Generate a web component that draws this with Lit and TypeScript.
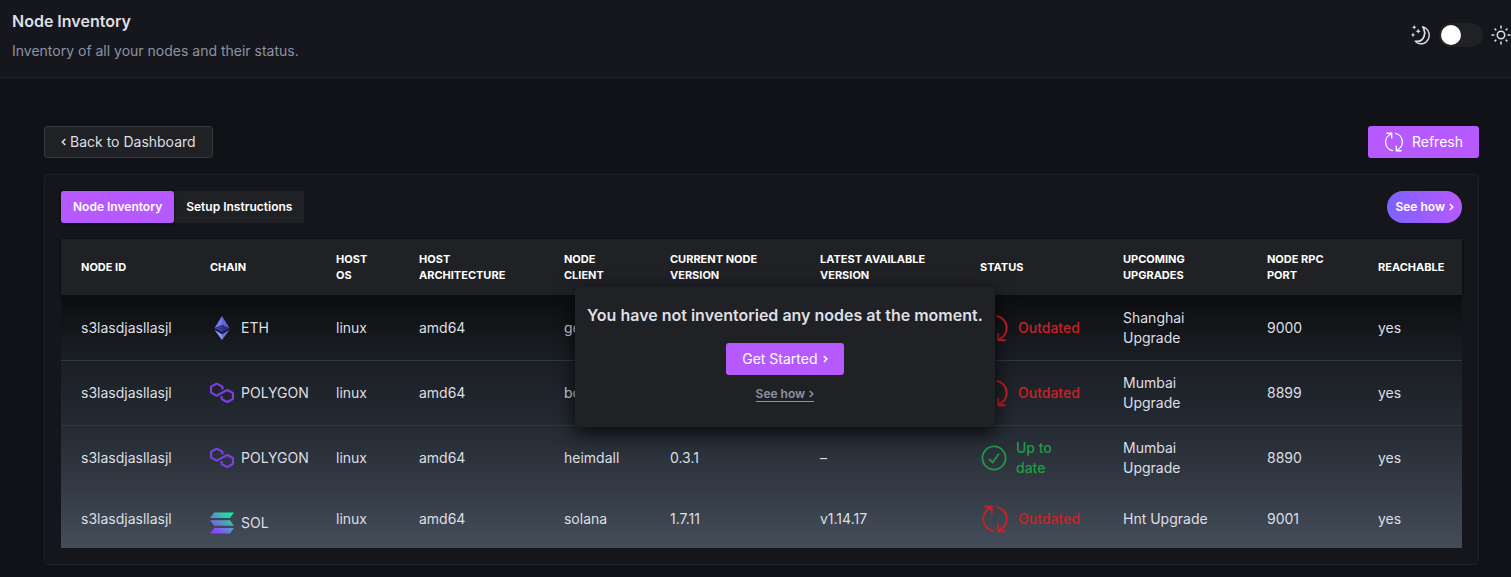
import { LitElement, html, css, svg } from "lit";
import { customElement, state } from "lit/decorators.js";

type Chain = "ETH" | "POLYGON" | "SOL";

interface NodeRow {
  id: string;
  chain: Chain;
  os: string;
  arch: string;
  client: string;
  current: string;
  latest: string;
  outdated: boolean;
  upgrade: string;
  port: string;
  reachable: string;
}

const COLUMNS = [
  { label: "Node ID", width: 129 },
  { label: "Chain", width: 126 },
  { label: "Host OS", width: 83 },
  { label: "Host Architecture", width: 145 },
  { label: "Node Client", width: 106 },
  { label: "Current Node Version", width: 150 },
  { label: "Latest Available Version", width: 160 },
  { label: "Status", width: 143 },
  { label: "Upcoming Upgrades", width: 144 },
  { label: "Node RPC Port", width: 111 },
  { label: "Reachable", width: 104 },
];
const TOTAL = COLUMNS.reduce((sum, c) => sum + c.width, 0);

const ROWS: NodeRow[] = [
  { id: "s3lasdjasllasjl", chain: "ETH", os: "linux", arch: "amd64", client: "geth", current: "", latest: "", outdated: true, upgrade: "Shanghai Upgrade", port: "9000", reachable: "yes" },
  { id: "s3lasdjasllasjl", chain: "POLYGON", os: "linux", arch: "amd64", client: "bor", current: "", latest: "", outdated: true, upgrade: "Mumbai Upgrade", port: "8899", reachable: "yes" },
  { id: "s3lasdjasllasjl", chain: "POLYGON", os: "linux", arch: "amd64", client: "heimdall", current: "0.3.1", latest: "–", outdated: false, upgrade: "Mumbai Upgrade", port: "8890", reachable: "yes" },
  { id: "s3lasdjasllasjl", chain: "SOL", os: "linux", arch: "amd64", client: "solana", current: "1.7.11", latest: "v1.14.17", outdated: true, upgrade: "Hnt Upgrade", port: "9001", reachable: "yes" },
];

const refreshIcon = (size: number) => html`<svg width=${size} height=${size} viewBox="0 0 26 26" fill="none" stroke="currentColor" stroke-width="1.7" aria-hidden="true">
  <path d="M11.6 24.2A11.3 11.3 0 0 1 9.6 2.4M3.2 1.6H10V8.4" />
  <path d="M14.4 1.8A11.3 11.3 0 0 1 16.4 23.6M22.8 24.4H16V17.6" />
</svg>`;

const checkIcon = html`<svg width="26" height="26" viewBox="0 0 26 26" fill="none" stroke="currentColor" stroke-width="1.7" aria-hidden="true">
  <circle cx="13" cy="13" r="11.6" />
  <path d="M8 13.8L11.6 17.4L18 8.6" />
</svg>`;

const chevron = (dir: "left" | "right") => html`<svg width="5" height="8" viewBox="0 0 5 8" fill="none" stroke="currentColor" stroke-width="1.5" aria-hidden="true">
  ${dir === "left" ? svg`<path d="M4.3 1L1.3 4L4.3 7" />` : svg`<path d="M0.8 1L3.8 4L0.8 7" />`}
</svg>`;

const moonIcon = html`<svg width="20" height="20" viewBox="0 0 20 20" fill="none" stroke="currentColor" stroke-width="1.4" stroke-linejoin="round" aria-hidden="true">
  <path d="M11.6 1.8C16.2 3 18.8 7 18.2 11.4C17.5 16.2 13.4 19.4 9 18.7C7 18.4 5.4 17.5 4.2 16.1C7.8 16.6 11.2 15.4 12.7 12.1C14.2 8.6 13.6 4.8 11.6 1.8Z" />
  <path d="M13 4.4C14.8 8.6 13.5 14 8.4 16.6" />
  <g fill="currentColor" stroke="none">
    <path d="M3.2 0L3.9 1.5L5.4 2.2L3.9 2.9L3.2 4.4L2.5 2.9L1 2.2L2.5 1.5Z" />
    <path d="M7.2 3.6L8 5.4L9.8 6.2L8 7L7.2 8.8L6.4 7L4.6 6.2L6.4 5.4Z" />
    <path d="M2 7.6L2.7 9.2L4.3 9.9L2.7 10.6L2 12.2L1.3 10.6L0 9.9L1.3 9.2Z" />
  </g>
</svg>`;

const sunIcon = html`<svg width="20" height="20" viewBox="0 0 20 20" fill="none" stroke="currentColor" stroke-width="1.5" aria-hidden="true">
  <circle cx="10" cy="10" r="3.7" />
  <path d="M10 0.4V3.4M10 16.6V19.6M0.4 10H3.4M16.6 10H19.6M3.6 3.6L5.3 5.3M14.7 14.7L16.4 16.4M3.6 16.4L5.3 14.7M14.7 5.3L16.4 3.6" />
</svg>`;

const CHAIN_ICONS = {
  ETH: html`<svg width="24" height="24" viewBox="0 0 24 24" aria-hidden="true">
    <path fill="#6f7cf0" d="M12 0L4.4 12.2L12 9Z" />
    <path fill="#5a66d8" d="M12 0L19.6 12.2L12 9Z" />
    <path fill="#353a9c" d="M4.4 12.2L12 8.8V16.6Z" />
    <path fill="#2b2f86" d="M19.6 12.2L12 8.8V16.6Z" />
    <path fill="#8b97ff" d="M4.4 13.8L12 18.2V24Z" />
    <path fill="#6672e6" d="M19.6 13.8L12 18.2V24Z" />
  </svg>`,
  POLYGON: html`<svg width="24" height="24" viewBox="0 0 24 24" fill="none" stroke="#7b3fe4" stroke-width="2.2" stroke-linejoin="round" aria-hidden="true">
    <path d="M12.4 8.6V6.2Q12.4 5.7 12 5.4L7.3 2.9Q6.7 2.6 6.1 2.9L1.6 5.4Q1 5.8 1 6.4V10.9Q1 11.5 1.6 11.9L6.1 14.4Q6.7 14.7 7.3 14.4L16.7 9.2Q17.3 8.9 17.9 9.2L22.4 11.7Q23 12.1 23 12.7V17.2Q23 17.8 22.4 18.2L17.9 20.8Q17.3 21.1 16.7 20.8L12 18.2Q11.6 17.9 11.6 17.4V15" />
  </svg>`,
  SOL: html`<svg width="24" height="22" viewBox="0 0 24 22" aria-hidden="true">
    <defs>
      <linearGradient id="sol" gradientUnits="userSpaceOnUse" x1="20" y1="0" x2="5" y2="20">
        <stop offset="0" stop-color="#14f195" />
        <stop offset="1" stop-color="#9040ff" />
      </linearGradient>
    </defs>
    <path fill="url(#sol)" d="M4.2 0.4H24L20 6H0ZM0 8.2H20L24 13.8H4.2ZM4.2 16H24L20 21.6H0Z" />
  </svg>`,
};

@customElement("app-root")
export class AppRoot extends LitElement {
  @state() private tab = 0;

  static styles = css`
    :host {
      display: block;
      min-height: 100vh;
      overflow: hidden;
      background: #111217;
      color: #dedfe3;
      font: 14px/20px Inter, "Open Sans", sans-serif;
    }
    * { box-sizing: border-box; }
    svg { display: block; flex: none; }
    h1, p { margin: 0; }
    button {
      font: inherit;
      color: inherit;
      border: 0;
      margin: 0;
      cursor: pointer;
      display: flex;
      align-items: center;
      justify-content: center;
      height: 32px;
      white-space: nowrap;
    }
    .topbar {
      display: flex;
      align-items: flex-start;
      justify-content: space-between;
      padding: 8px 0 16px 12px;
      background: #16171c;
      border-bottom: 1px solid #222327;
    }
    .title { font-size: 16px; line-height: 26px; font-weight: 600; }
    .subtitle { margin-top: 7px; color: #8b93a3; }
    .theme { display: flex; align-items: center; gap: 8px; padding-top: 15px; }
    .switch {
      appearance: none;
      margin: 0;
      width: 44px;
      height: 24px;
      padding: 2px;
      border-radius: 12px;
      background: #202125;
      box-shadow: 0 4px 24px #0000001a;
      cursor: pointer;
    }
    .switch::before {
      content: "";
      display: block;
      width: 20px;
      height: 20px;
      border-radius: 50%;
      background: #fff;
    }
    .switch:checked::before { margin-left: auto; }
    .page { padding: 48px 32px 12px 44px; }
    .actions { display: flex; justify-content: space-between; margin-bottom: 16px; }
    .back {
      gap: 4px;
      padding: 0 16px;
      background: #202125;
      border: 1px solid #37383a;
      border-radius: 3px;
    }
    .primary {
      padding: 0 16px;
      border-radius: 3px;
      background: #b659ff;
      color: #fff;
      gap: 8px;
    }
    .card {
      padding: 16px;
      border: 1px solid #202126;
      border-radius: 4px;
      background: #15161b;
    }
    .cardhead { display: flex; justify-content: space-between; margin-bottom: 16px; }
    .tabs { display: flex; background: #202125; }
    .tab {
      padding: 0 12px;
      background: none;
      color: #fff;
      font-size: 12px;
      font-weight: 600;
    }
    .tab.active { background: #b659ff; border-radius: 3px; box-shadow: 0 1px 3px #000000b3; }
    .pill {
      gap: 4px;
      padding: 0 8px;
      border-radius: 16px;
      background: linear-gradient(90deg, #7d62ff, #b659ff);
      color: #fff;
      font-size: 12px;
      font-weight: 600;
    }
    .tablewrap { position: relative; }
    table { width: 100%; table-layout: fixed; border-collapse: separate; border-spacing: 0; }
    thead { background: #202125; }
    thead tr { box-shadow: 0 2px 3px #000; }
    th {
      height: 56px;
      padding: 0 20px;
      text-align: left;
      font-size: 11px;
      line-height: 16px;
      font-weight: 700;
      text-transform: uppercase;
      color: #fff;
    }
    tbody { background: linear-gradient(#0c0d0f, #1b1f24 26%, #242a32 51%, #343b46 77%, #434d59); }
    td { height: 65px; padding: 0 20px; border-bottom: 1px solid #2f3a48; }
    tr:first-child td { height: 66px; padding-top: 1px; }
    tr:nth-child(3) td { border-color: #343b46; }
    tr:last-child td { height: 57px; border-color: #3f4b5a; }
    .chain { display: flex; align-items: center; gap: 7px; }
    tr:last-child .chain { padding-top: 8px; }
    .status { display: flex; align-items: center; gap: 9px; padding-left: 1px; }
    .outdated { color: #cd2026; font-weight: 500; }
    .current { color: #1f9d45; font-weight: 500; }
    .current .label { width: 44px; }
    .dialog {
      position: absolute;
      top: 48px;
      right: 33.3333%;
      width: 30%;
      height: 140px;
      padding: 16px 8px;
      display: flex;
      flex-direction: column;
      align-items: center;
      border-radius: 5px;
      background: #202125;
      box-shadow: 0 6px 20px #000000cc;
      white-space: nowrap;
    }
    .message { font-size: 16px; line-height: 24px; font-weight: 600; }
    .dialog .primary { margin: 16px 0 12px; gap: 5px; }
    .link {
      display: flex;
      align-items: center;
      gap: 4px;
      color: #8b93a3;
      font-size: 12px;
      line-height: 14px;
      font-weight: 600;
      text-decoration: none;
      border-bottom: 1px solid #8b93a3;
    }
  `;

  private renderRow(row: NodeRow) {
    return html`<tr>
      <td>${row.id}</td>
      <td><div class="chain">${CHAIN_ICONS[row.chain]}<span>${row.chain}</span></div></td>
      <td>${row.os}</td>
      <td>${row.arch}</td>
      <td>${row.client}</td>
      <td>${row.current}</td>
      <td>${row.latest}</td>
      <td>
        <div class="status ${row.outdated ? "outdated" : "current"}">
          ${row.outdated ? refreshIcon(28) : checkIcon}
          <span class="label">${row.outdated ? "Outdated" : "Up to date"}</span>
        </div>
      </td>
      <td>${row.upgrade}</td>
      <td>${row.port}</td>
      <td>${row.reachable}</td>
    </tr>`;
  }

  render() {
    return html`
      <header class="topbar">
        <div>
          <h1 class="title">Node Inventory</h1>
          <p class="subtitle">Inventory of all your nodes and their status.</p>
        </div>
        <div class="theme">
          ${moonIcon}
          <input class="switch" type="checkbox" role="switch" aria-label="Light theme" />
          ${sunIcon}
        </div>
      </header>
      <main class="page">
        <div class="actions">
          <button class="back">${chevron("left")}<span>Back to Dashboard</span></button>
          <button class="primary">${refreshIcon(20)}<span>Refresh</span></button>
        </div>
        <section class="card">
          <div class="cardhead">
            <div class="tabs" role="tablist">
              ${["Node Inventory", "Setup Instructions"].map(
                (label, i) => html`<button class="tab ${this.tab === i ? "active" : ""}" role="tab"
                  aria-selected=${this.tab === i ? "true" : "false"} @click=${() => (this.tab = i)}>${label}</button>`
              )}
            </div>
            <button class="pill"><span>See how</span>${chevron("right")}</button>
          </div>
          <div class="tablewrap">
            <table>
              <colgroup>
                ${COLUMNS.map((c) => html`<col style="width:${(c.width / TOTAL) * 100}%" />`)}
              </colgroup>
              <thead>
                <tr>${COLUMNS.map((c) => html`<th scope="col">${c.label}</th>`)}</tr>
              </thead>
              <tbody>${ROWS.map((row) => this.renderRow(row))}</tbody>
            </table>
            <div class="dialog" role="dialog" aria-label="No nodes">
              <p class="message">You have not inventoried any nodes at the moment.</p>
              <button class="primary"><span>Get Started</span>${chevron("right")}</button>
              <a class="link" href="#how"><span>See how</span>${chevron("right")}</a>
            </div>
          </div>
        </section>
      </main>
    `;
  }
}
